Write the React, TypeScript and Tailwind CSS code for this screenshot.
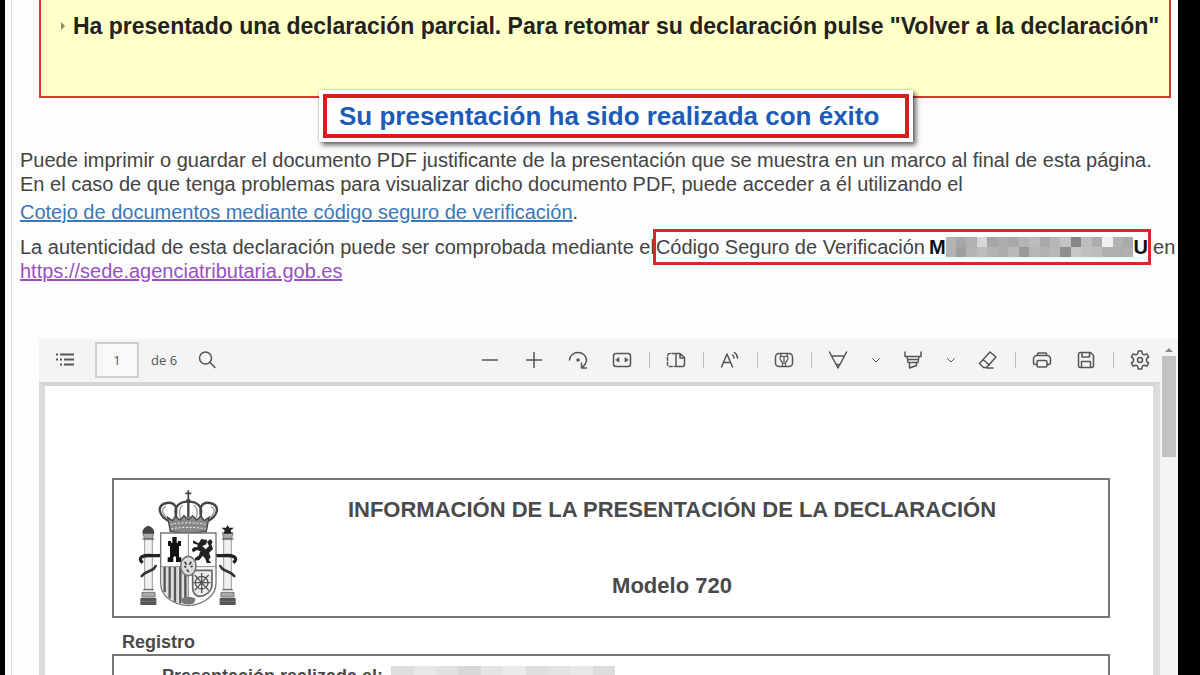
import type { ReactNode } from 'react';

interface ToolButtonProps {
    label: string;
    narrow?: boolean;
    children: ReactNode;
}

function ToolButton({ label, narrow = false, children }: ToolButtonProps) {
    return (
        <button
            type="button"
            aria-label={label}
            className={`${narrow ? 'w-[31px]' : 'w-11'} h-8 flex shrink-0 items-center justify-center hover:bg-black/5`}
        >
            <svg
                viewBox="0 0 20 20"
                className={narrow ? 'w-2.5 h-2.5' : 'w-5 h-5'}
                fill="none"
                stroke="currentColor"
                strokeWidth={narrow ? 2 : 1.5}
                strokeLinecap="round"
                strokeLinejoin="round"
            >
                {children}
            </svg>
        </button>
    );
}

function Separator() {
    return <span className="w-2.5 flex shrink-0 justify-center"><span className="w-px h-4 bg-[#bdbdbd]" /></span>;
}

const CODE_TOP = ['bg-[#b4b4b4]', 'bg-[#a8a8a8]', 'bg-[#b0b0b0]', 'bg-[#d6d6d6]', 'bg-[#a6a6a6]', 'bg-[#adadad]', 'bg-[#a8a8a8]', 'bg-[#b5b5b5]', 'bg-[#bcbcbc]', 'bg-[#a9a9a9]', 'bg-[#b6b6b6]', 'bg-[#c4c4c4]', 'bg-[#858585]', 'bg-[#bdbdbd]', 'bg-[#adadad]', 'bg-[#f0f0f0]', 'bg-[#b3b3b3]', 'bg-[#aaaaaa]'];
const CODE_BOTTOM = ['bg-[#b3b3b3]', 'bg-[#9f9f9f]', 'bg-[#b5b5b5]', 'bg-[#bcbcbc]', 'bg-[#b2b2b2]', 'bg-[#adadad]', 'bg-[#b9b9b9]', 'bg-[#999999]', 'bg-[#b6b6b6]', 'bg-[#b2b2b2]', 'bg-[#b8b8b8]', 'bg-[#8f8f8f]', 'bg-[#c6c6c6]', 'bg-[#c0c0c0]', 'bg-[#bdbdbd]', 'bg-[#b0b0b0]', 'bg-[#aeaeae]', 'bg-[#b1b1b1]'];
const DATE_CELLS = ['bg-[#dedede]', 'bg-[#e8e8e8]', 'bg-[#e2e2e2]', 'bg-[#d8d8d8]', 'bg-[#e4e4e4]', 'bg-[#ebebeb]', 'bg-[#dedede]', 'bg-[#e3e3e3]', 'bg-[#e8e8e8]', 'bg-[#dddddd]'];

function HiddenCode() {
    return (
        <span className="w-[188px] h-5 flex flex-col">
            {[CODE_TOP, CODE_BOTTOM].map((row, r) => (
                <span key={r} className="flex-1 flex">
                    {row.map((shade, i) => <span key={i} className={`flex-1 ${shade}`} />)}
                </span>
            ))}
        </span>
    );
}

function Column({ star = false }: { star?: boolean }) {
    return (
        <g>
            <path d="M39 149h32l-4 17H43z" fill="#aaa" stroke="#777" strokeWidth="3" />
            {star ? (
                <path d="M55 126l5 8 14 0-10 8 3 10H43l3-10-10-8 14 0z" fill="#222" />
            ) : (
                <path d="M38 152c-3-12 6-20 17-24 11 4 20 12 17 24z" fill="#444" />
            )}
            <path d="M44 167h23v152H44z" fill="#f0f0f0" stroke="#999" strokeWidth="3" />
            <path d="M38 168h34M40 320h31" stroke="#666" strokeWidth="4" />
            <path d="M36 328h39v14H36z" fill="#aaa" stroke="#777" strokeWidth="3" />
            <path d="M31 345h48v21H31z" fill="#555" />
            <path d="M31 355h48" stroke="#888" strokeWidth="2" />
            <path d="M94 217c-22 4-42-4-58 4-8 5-6 11 2 18" fill="none" stroke="#222" strokeWidth="10" />
            <path d="M77 246c2 18-36 18-43 36" fill="none" stroke="#333" strokeWidth="8" />
        </g>
    );
}

function CoatOfArms() {
    return (
        <svg viewBox="24 18 306 354" className="w-[102px] h-[118px] shrink-0" role="img" aria-label="Escudo de España">
            {/* Crown */}
            <path d="M175 22v28M166 31h18" stroke="#444" strokeWidth="5" />
            <circle cx="175" cy="54" r="7" fill="#444" />
            <path
                d="M121 117C82 98 80 66 110 60c24-4 34 10 26 48M229 117c39-19 41-51 11-57-24-4-34 10-26 48M140 106c-12-36 8-50 35-50s47 14 35 50M175 58v46"
                fill="none"
                stroke="#444"
                strokeWidth="7"
            />
            <path d="M107 70c-16 8-10 26 8 39M243 70c16 8 10 26-8 39M158 66c-10 10-12 24-6 40M192 66c10 10 12 24 6 40" fill="none" stroke="#999" strokeWidth="4" />
            <path d="M113 103l14 10 10-13 13 11 12-13 13 12 13-12 12 13 13-11 10 13 14-10-8 42c-34 6-74 6-108 0z" fill="#888" stroke="#444" strokeWidth="4" />
            <path d="M122 124c34-6 72-6 106 0M124 137c34-5 68-5 102 0" stroke="#eee" strokeWidth="3" strokeDasharray="6 5" fill="none" />

            <Column />
            <g transform="translate(348 0) scale(-1 1)"><Column star /></g>

            {/* Shield */}
            <path d="M92 150h166v150c0 38-34 64-83 68-49-4-83-30-83-68z" fill="#fff" stroke="#777" strokeWidth="4" />
            <path d="M95 251h80v112c-46-3-78-24-80-58z" fill="#ddd" />
            <path d="M104 252v75M119 252v94M135 252v104M151 252v109M166 252v111" stroke="#555" strokeWidth="7" />
            <path d="M175 150v216M92 251h166" stroke="#888" strokeWidth="3" />
            <path d="M113 237v-14h7v-34h-6v-15h9v5h4v-17h13v17h4v-5h9v15h-6v34h7v14h-16v-12c0-7-8-7-8 0v12z" fill="#111" />
            <path d="M189 172l17 9 8-13 17 3-2 13-12 5 10 10 10-10-6-13 10-8 7 9-4 7 5 14-12 12 5 12-6 9 8 9h-14l-4-13-8-9-9 12-16 4 3-10 10-6 5-13-10-4-12 7-4-9 9-7 8 1 1-8-14-4z" fill="#222" />
            <path d="M188 262h58v42c0 20-18 36-40 36-13-4-18-12-18-26z" fill="#eee" stroke="#666" strokeWidth="5" />
            <circle cx="215" cy="299" r="19" fill="none" stroke="#555" strokeWidth="4" />
            <path d="M215 270v60M190 299h52M194 276l42 46M236 276l-42 46" stroke="#555" strokeWidth="4" />
            <path d="M154 348c12-8 32-8 43 0l-5 13c-10 4-24 4-34 0z" fill="#777" />
            <ellipse cx="175" cy="249" rx="23" ry="29" fill="#ddd" stroke="#777" strokeWidth="5" />
            <path d="M164 236l6 9m14-9l-6 9m-7 14l5 8m-14-17l7 3m13-1l6-3" stroke="#444" strokeWidth="5" />
        </svg>
    );
}

function PdfToolbar() {
    return (
        <div className="flex items-center justify-between h-[43px] pb-0.5 bg-[#f4f4f4] text-[#555] font-['Open_Sans',sans-serif]">
            <div className="flex items-center pl-1">
                <ToolButton label="Contenido">
                    <path d="M1 4.500h2M5 4.500h14M5 9.500h2M9 9.500h10M1 9.500h2M5 14.500h2M9 14.500h10" strokeLinecap="butt" strokeWidth="2" />
                </ToolButton>
                <input
                    aria-label="Página"
                    defaultValue="1"
                    className="ml-2 w-11 h-9 border-2 border-[#cfcfcf] bg-[#f8f8f8] text-center text-[13px] outline-none"
                />
                <span className="ml-3 text-[13px]">de 6</span>
                <span className="ml-2 flex">
                    <ToolButton label="Buscar">
                        <circle cx="8.5" cy="8" r="6" />
                        <path d="M13 12.5l5 5" />
                    </ToolButton>
                </span>
            </div>
            <div className="-mr-0.5 flex items-center">
                <ToolButton label="Alejar"><path d="M2.500 10h15" /></ToolButton>
                <ToolButton label="Acercar"><path d="M2.500 10h15M10 2.500v15" /></ToolButton>
                <ToolButton label="Girar">
                    <path d="M1.500 10a8.500 7.500 0 0 1 17 0c0 3-2 5.500-4.500 7.500M13.500 13v5h5" />
                    <circle cx="10" cy="10" r="1" fill="currentColor" />
                </ToolButton>
                <ToolButton label="Ajustar al ancho">
                    <rect x="1.500" y="3.500" width="17" height="13" rx="2.500" />
                    <path d="M7 8v4l-3-2zM13 8v4l3-2z" fill="currentColor" strokeWidth="0.800" />
                </ToolButton>
                <Separator />
                <ToolButton label="Vista de página">
                    <path d="M9 3.500H4a2.500 2.500 0 0 0-2.500 2.500v8A2.500 2.500 0 0 0 4 16.500h5" strokeDasharray="3 2" />
                    <path d="M10 3.500h4l4.500 4v7a2 2 0 0 1-2 2H10zM14 3.500V8h4.500" />
                </ToolButton>
                <Separator />
                <ToolButton label="Leer en voz alta">
                    <path d="M1.500 17L7 4l5.500 13M3.500 12.500h7M12.500 5c1 .7 1.500 1.800 1.500 3M14.500 2.500c2 1.500 3 3.300 3 5.500" />
                </ToolButton>
                <Separator />
                <ToolButton label="Agregar texto">
                    <rect x="1.500" y="3.500" width="17" height="13" rx="3.500" />
                    <path d="M6.500 6.500h7M10 6.500v7M7 4c0 2-1 2.500-1 4.500s2.500 3 2.500 5v3M13 4c0 2 1 2.500 1 4.500s-2.500 3-2.500 5v3" strokeWidth="1.200" />
                </ToolButton>
                <Separator />
                <ToolButton label="Dibujar">
                    <path d="M1.500 2l2 4L10 18l6.500-12 2-4M3.500 6h13M8 14.500h4" />
                </ToolButton>
                <ToolButton label="Opciones de dibujo" narrow><path d="M3 7l7 7 7-7" /></ToolButton>
                <ToolButton label="Resaltar">
                    <path d="M2 2v4.500h16V2M4 6.500l1 6h10l1-6M6.500 12.500V18l7-2.500v-3M4.500 9.500h11" />
                </ToolButton>
                <ToolButton label="Opciones de resaltado" narrow><path d="M3 7l7 7 7-7" /></ToolButton>
                <ToolButton label="Borrar">
                    <path d="M12 2l6 5-9.500 10.500h-3L1.500 13.500zM5 9.500l6.500 5.500M8.500 18H15" />
                </ToolButton>
                <Separator />
                <ToolButton label="Imprimir">
                    <path d="M5 5.500l1-2.500h8l1 2.500M5 14.500H3.500a2 2 0 0 1-2-2V9A3.500 3.500 0 0 1 5 5.500h10A3.500 3.500 0 0 1 18.500 9v3.500a2 2 0 0 1-2 2H15" />
                    <rect x="5" y="10.500" width="10" height="6.500" rx="1.500" />
                </ToolButton>
                <ToolButton label="Guardar">
                    <path d="M4 2.500h10.500l3 3V15.500a2 2 0 0 1-2 2H4.500a2 2 0 0 1-2-2v-11a2 2 0 0 1 1.500-2zM6 2.500v4.500h7.500v-4.500M5.500 17.500v-6h9v6" />
                </ToolButton>
                <Separator />
                <ToolButton label="Configuración">
                    <path d="M8.300 1h3.400l.7 2.800 1.700 1 2.800-.9 1.700 3-2.100 2v2.200l2.100 2-1.700 3-2.800-.9-1.700 1-.7 2.800H8.300l-.7-2.800-1.700-1-2.800.9-1.700-3 2.100-2V8.900l-2.100-2 1.700-3 2.800.9 1.700-1z" />
                    <circle cx="10" cy="10" r="2.500" />
                </ToolButton>
            </div>
        </div>
    );
}

export default function App() {
    return (
        <div className="h-screen overflow-hidden bg-black pl-[5px] pr-[22px] font-['Liberation_Sans',sans-serif] text-[20px] leading-6 text-[#444]">
            <main className="min-h-full bg-[#fdfdfd] pl-1.5">
                <div className="min-h-screen border-l border-[#e2e2e2]">
                    <ul className="ml-[27px] mr-[7px] border-x-2 border-b-2 border-[#d9362f] bg-[#ffffc8] pt-3 pb-14">
                        <li className="flex items-center h-7 pl-5 gap-2 whitespace-nowrap text-[23px] font-bold text-[#222]">
                            <span className="border-y-4 border-l-4 border-y-transparent border-l-[#8a8a70]" />
                            Ha presentado una declaración parcial. Para retomar su declaración pulse "Volver a la declaración"
                        </li>
                    </ul>

                    <div className="relative -mt-2 ml-[307px] w-fit bg-white p-1 shadow-[3px_3px_5px_rgba(0,0,0,0.6),0_0_2px_rgba(0,0,0,0.3)]">
                        <h1 className="flex items-center h-11 border-4 border-[#dc1c1c] pl-3 pr-[26px] text-[26px] font-bold text-[#1c5cb8] whitespace-nowrap">
                            Su presentación ha sido realizada con éxito
                        </h1>
                    </div>

                    <div className="mt-1.5 pl-2 whitespace-nowrap">
                        <p>Puede imprimir o guardar el documento PDF justificante de la presentación que se muestra en un marco al final de esta página.</p>
                        <p>En el caso de que tenga problemas para visualizar dicho documento PDF, puede acceder a él utilizando el</p>
                        <p className="mt-1">
                            <a href="#cotejo" className="text-[#3a78b8] underline">Cotejo de documentos mediante código seguro de verificación</a>.
                        </p>
                        <div className="mt-[11px] flex items-center h-6">
                            La autenticidad de esta declaración puede ser comprobada mediante el
                            <span className="relative -ml-0.5 -my-2 flex h-9 shrink-0 items-center border-[3px] border-[#d62a2a]">
                                Código Seguro de Verificación
                                <b className="ml-1 text-[#111]">M</b>
                                <HiddenCode />
                                <b className="text-[#111]">U</b>
                            </span>
                            <span className="ml-0.5">en</span>
                        </div>
                        <p>
                            <a href="https://sede.agenciatributaria.gob.es" className="text-[#9a4fc4] underline">https://sede.agenciatributaria.gob.es</a>
                        </p>
                    </div>

                    {/* PDF viewer */}
                    <section className="mt-14 ml-[27px] flex">
                        <div className="flex-1 min-w-0">
                            <PdfToolbar />
                            <div className="border-t-4 border-l-[6px] border-r-[7px] border-t-[#d4d4d4] border-x-[#dcdcdc] bg-white pt-[92px] pl-[67px] pr-[43px] text-[#4a4a4a]">
                                <div className="flex items-center h-[140px] border-2 border-[#777] pl-6 pr-1">
                                    <CoatOfArms />
                                    <div className="flex-1 flex flex-col gap-12 text-center text-[22px] leading-7 font-bold">
                                        <h2>INFORMACIÓN DE LA PRESENTACIÓN DE LA DECLARACIÓN</h2>
                                        <p>Modelo 720</p>
                                    </div>
                                </div>
                                <h3 className="mt-3 pl-2.5 text-[18px] font-bold">Registro</h3>
                                <div className="flex h-20 items-start gap-1 border-2 border-[#777] pt-2 pl-12 text-[18px] font-bold">
                                    Presentación realizada el:
                                    <span className="mt-0.5 ml-1 flex h-5 w-56">
                                        {DATE_CELLS.map((shade, i) => <span key={i} className={`flex-1 ${shade}`} />)}
                                    </span>
                                </div>
                            </div>
                        </div>
                        <div className="w-[18px] bg-[#f4f4f4] px-0.5 pt-1.5">
                            <svg viewBox="0 0 14 11" className="w-full h-[11px]" aria-hidden="true">
                                <path d="M3 7l4-4 4 4z" fill="#888" />
                            </svg>
                            <div className="h-[101px] bg-[#c2c2c2]" />
                        </div>
                    </section>
                </div>
            </main>
        </div>
    );
}
